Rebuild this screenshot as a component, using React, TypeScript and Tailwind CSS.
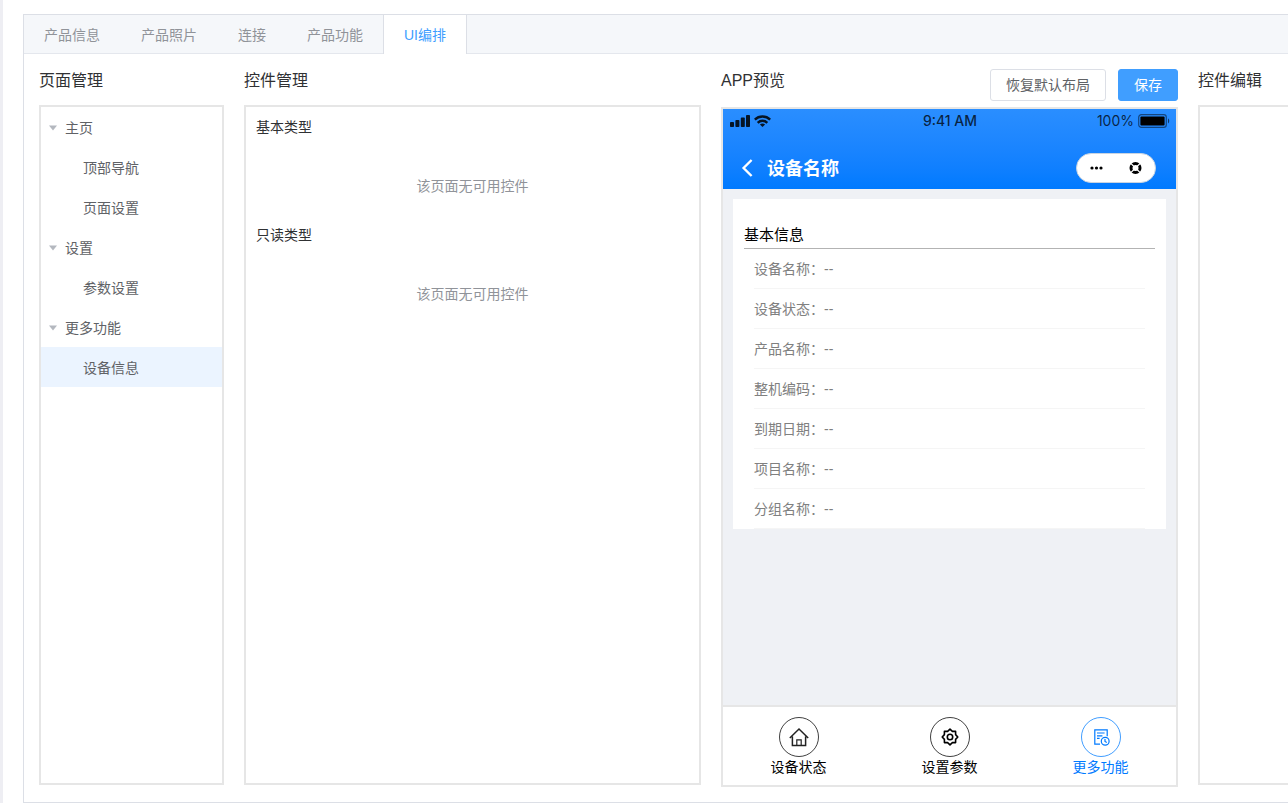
import clsx from "clsx";

const tabs = ["产品信息", "产品照片", "连接", "产品功能", "UI编排"];

const pages = [
  { name: "主页", children: ["顶部导航", "页面设置"] },
  { name: "设置", children: ["参数设置"] },
  { name: "更多功能", children: ["设备信息"] },
];

const widgetGroups = ["基本类型", "只读类型"];

const deviceFields = ["设备名称", "设备状态", "产品名称", "整机编码", "到期日期", "项目名称", "分组名称"];

const navItems = [
  {
    label: "设备状态",
    icon: (
      <svg className="h-5 w-5" viewBox="0 0 20 20" fill="none" stroke="#222" strokeWidth={1.5}>
        <path d="M.8 11 10 2l9.2 9M3.4 9.4v9.1h13.2V9.4" />
        <path d="M7.8 18.4v-5.6h4.4v5.6" strokeWidth={1.2} />
      </svg>
    ),
  },
  {
    label: "设置参数",
    icon: (
      <svg className="h-5 w-5" viewBox="0 0 20 20" fill="none" stroke="currentColor" strokeWidth={1.6} strokeLinejoin="round">
        <path d="M10 2.2 12.4 4.4H15.6V7.6L17.8 10 15.6 12.4V15.6H12.4L10 17.8 7.6 15.6H4.4V12.4L2.2 10 4.4 7.6V4.4H7.6Z" />
        <circle cx="10" cy="10" r="2.7" />
      </svg>
    ),
  },
  {
    label: "更多功能",
    active: true,
    icon: (
      <svg className="h-5 w-5" viewBox="0 0 20 20" fill="none" stroke="currentColor" strokeWidth={1.2}>
        <path d="M9 17.2H3.8V2.8h12.4v6.4" />
        <path d="M6 6h7.6M6 8.8h5.4M6 11.4h2.6" />
        <circle cx="14.2" cy="14.2" r="3.9" />
        <path d="M14 12v2.4l1.8 1" />
      </svg>
    ),
  },
];

function PageTree() {
  return (
    <ul className="h-[680px] border-2 border-[#e6e6e6] text-[#606266]">
      {pages.map((page) => (
        <li key={page.name}>
          <button className="flex h-10 w-full items-center gap-2 px-2 pt-px">
            <svg className="h-2 w-2 text-[#b4b8bf]" viewBox="0 0 8 8" fill="currentColor">
              <path d="M0 1.6h8L4 6.4z" />
            </svg>
            {page.name}
          </button>
          {page.children.map((child) => (
            <button
              key={child}
              className={clsx("flex h-10 w-full items-center pt-px pl-[42px]", child === "设备信息" && "bg-[#ebf4ff]")}
            >
              {child}
            </button>
          ))}
        </li>
      ))}
    </ul>
  );
}

function StatusBar() {
  return (
    <div className="grid h-6 grid-cols-3 items-center pr-1.5 pl-[7px] font-['Inter','Liberation_Sans',sans-serif] text-black/75">
      <div className="flex items-center gap-1 text-black/85">
        <svg className="h-3 w-5" viewBox="0 0 20 12" fill="currentColor">
          <rect x="0" y="7" width="4" height="5" rx="0.8" />
          <rect x="5.4" y="5" width="4" height="7" rx="0.8" />
          <rect x="10.8" y="2.6" width="4" height="9.4" rx="0.8" />
          <rect x="16" y="0" width="4" height="12" rx="0.8" />
        </svg>
        <svg className="h-3 w-[17px]" viewBox="0 0 17 12" fill="none" stroke="currentColor" strokeWidth={2.4}>
          <path d="M0.8 4.6a11 11 0 0 1 15.4 0" />
          <path d="M3.7 7.8a6.8 6.8 0 0 1 9.6 0" />
          <path d="M8.5 12 5.9 9.6a3.8 3.8 0 0 1 5.2 0z" fill="currentColor" stroke="none" />
        </svg>
      </div>
      <span className="text-center text-sm font-medium">9:41 AM</span>
      <div className="flex items-center justify-end gap-1">
        <span className="text-sm">100%</span>
        <svg className="h-3.5 w-8" viewBox="0 0 32 14">
          <rect x="0.7" y="0.7" width="27.6" height="12.6" rx="2.6" fill="none" stroke="#000" strokeOpacity="0.5" strokeWidth={1.2} />
          <rect x="2.4" y="2.4" width="24.2" height="9.2" rx="1" fill="#000" />
          <path d="M30 4.6c1.6.6 1.6 4.2 0 4.8z" fill="#000" fillOpacity="0.6" />
        </svg>
      </div>
    </div>
  );
}

function AppPreview() {
  return (
    <div className="flex h-[680px] flex-col border-2 border-[#e6e6e6] bg-[#eff1f5]">
      <div className="h-20 bg-linear-to-b from-[#2a8eff] to-[#007aff]">
        <StatusBar />
        <div className="flex items-center justify-between pt-5 pr-5 pl-4">
          <div className="flex items-center gap-3">
            <button aria-label="返回">
              <svg className="h-5 w-4" viewBox="0 0 16 20" fill="none" stroke="#fff" strokeWidth={2.4}>
                <path d="M12.6 2 4.6 10l8 8" />
              </svg>
            </button>
            <h3 className="pt-0.5 text-lg font-bold text-white">设备名称</h3>
          </div>
          <div className="flex h-[30px] w-20 items-center justify-around rounded-full border border-[#c8d4e2] bg-white">
            <svg className="h-4 w-4" viewBox="0 0 16 16">
              <circle cx="3" cy="8" r="1.6" />
              <circle cx="7.5" cy="8" r="1.6" />
              <circle cx="12" cy="8" r="1.6" />
            </svg>
            <svg className="h-4 w-4" viewBox="0 0 16 16" fill="none" stroke="#000">
              <circle cx="7.5" cy="8" r="4.5" strokeWidth={3} />
              <path d="M2.8 3.3 6 6.5M12.2 3.3 9 6.5M2.8 12.7 6 9.5M12.2 12.7 9 9.5" stroke="#fff" strokeWidth={1.2} />
            </svg>
          </div>
        </div>
      </div>

      <div className="flex-1 p-2.5">
        <div className="bg-white px-[11px] pt-6">
          <h4 className="h-[26px] border-b border-[#b3b3b3] text-[15px] leading-6 text-black">基本信息</h4>
          <ul className="px-2.5">
            {deviceFields.map((field) => (
              <li key={field} className="flex h-10 items-center border-b border-[#f5f5f5] text-[#808080]">
                {field}：--
              </li>
            ))}
          </ul>
        </div>
      </div>

      <nav className="grid h-20 grid-cols-3 border-t-2 border-[#e6e6e6] bg-white pt-2.5">
        {navItems.map((item) => (
          <button
            key={item.label}
            className={clsx("flex flex-col items-center", item.active ? "text-[#007aff]" : "text-black")}
          >
            <span className="flex h-10 w-10 items-center justify-center rounded-full border border-current/75">
              {item.icon}
            </span>
            <span className="leading-5">{item.label}</span>
          </button>
        ))}
      </nav>
    </div>
  );
}

export default function App() {
  return (
    <div className="overflow-hidden border-l-3 border-[#eeeef3] bg-white pt-3.5 pl-5 font-['Liberation_Sans','Noto_Sans_CJK_SC',sans-serif] text-sm text-[#303133]">
      <div className="border-y border-l border-[#dcdfe6]">
        <div className="flex h-[39px] border-b border-[#e4e7ed] bg-[#f5f7fa]">
          {tabs.map((tab) => (
            <button
              key={tab}
              className={clsx(
                "-ml-px h-[39px] border-x px-5",
                tab === "UI编排" ? "border-[#dcdfe6] bg-white text-[#409eff]" : "border-transparent text-[#909399]"
              )}
            >
              {tab}
            </button>
          ))}
        </div>

        <main className="grid grid-cols-[185px_minmax(0,1fr)_minmax(0,1fr)_90px] gap-5 py-[15px] pl-[15px]">
          <section>
            <h2 className="h-9 text-base leading-6">页面管理</h2>
            <PageTree />
          </section>

          <section>
            <h2 className="h-9 text-base leading-6">控件管理</h2>
            <div className="h-[680px] border-2 border-[#e6e6e6] px-2.5">
              {widgetGroups.map((group) => (
                <div key={group} className="pt-2 pb-[18px]">
                  <h3 className="leading-6">{group}</h3>
                  <p className="pt-9 text-center leading-[22px] text-[#909399]">该页面无可用控件</p>
                </div>
              ))}
            </div>
          </section>

          <section>
            <div className="flex h-[38px] items-start justify-between">
              <h2 className="text-base leading-6">APP预览</h2>
              <div className="flex gap-3">
                <button className="h-8 rounded-[3px] border border-[#dcdfe6] px-[15px] text-[#606266]">恢复默认布局</button>
                <button className="h-8 rounded-[3px] border border-[#409eff] bg-[#409eff] px-[15px] text-white">保存</button>
              </div>
            </div>
            <AppPreview />
          </section>

          <section>
            <h2 className="h-9 text-base leading-6">控件编辑</h2>
            <div className="h-[680px] border-y-2 border-l-2 border-[#e6e6e6]" />
          </section>
        </main>
      </div>
    </div>
  );
}
